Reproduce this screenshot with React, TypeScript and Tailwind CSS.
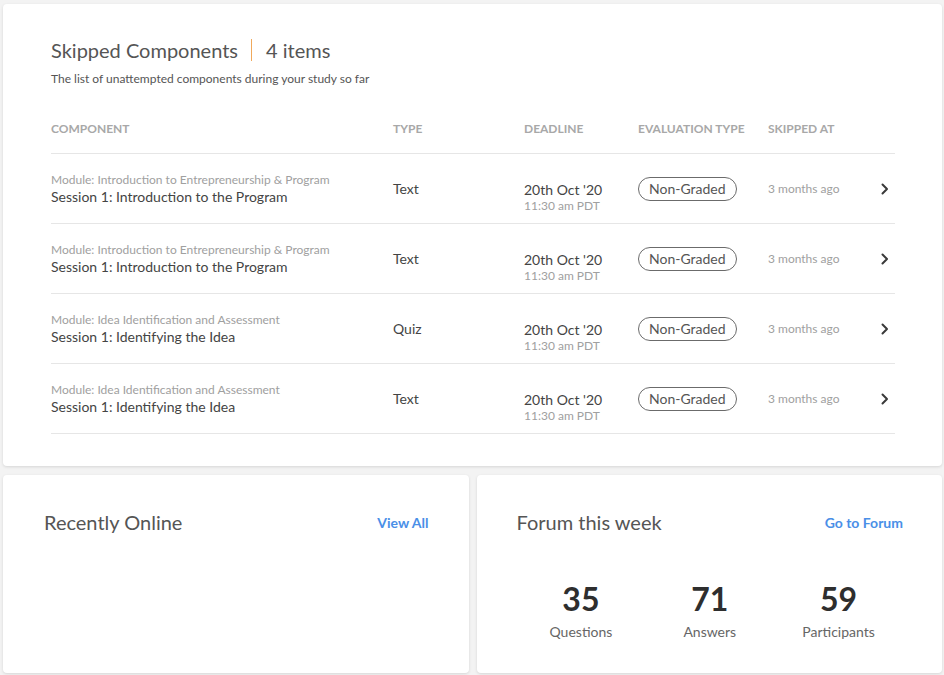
import React from "react";

const rows = [
    { module: "Module: Introduction to Entrepreneurship & Program", session: "Session 1: Introduction to the Program", type: "Text" },
    { module: "Module: Introduction to Entrepreneurship & Program", session: "Session 1: Introduction to the Program", type: "Text" },
    { module: "Module: Idea Identification and Assessment", session: "Session 1: Identifying the Idea", type: "Quiz" },
    { module: "Module: Idea Identification and Assessment", session: "Session 1: Identifying the Idea", type: "Text" },
];

const stats = [
    { value: "35", label: "Questions" },
    { value: "71", label: "Answers" },
    { value: "59", label: "Participants" },
];

const cols = "grid grid-cols-[342px_131px_114px_130px_1fr] items-center";

function Chevron() {
    return (
        <svg width="8" height="12" viewBox="0 0 8 12" fill="none">
            <path d="M1.5 1.5L6 6l-4.5 4.5" stroke="#3a3a3a" strokeWidth="2" strokeLinecap="round" strokeLinejoin="round"/>
        </svg>
    );
}

export default function App() {
    return (
        <div className="min-h-[675px] bg-[#f3f3f3] pl-[3px] pr-[2px] pt-[4px] pb-[2px] font-['Lato','Open_Sans',sans-serif] text-[#444]">
            {/* skipped components */}
            <section className="bg-white rounded-[4px] shadow-[0_1px_3px_rgba(0,0,0,0.12)] pl-[48px] pr-[47px] pt-[33px] pb-[32px]">
                <div className="flex items-center text-[20px] leading-[26px] text-[#555]">
                    <span>Skipped Components</span>
                    <span className="ml-[13px] mr-[14px] w-px h-[22px] bg-[#f0a95c]"></span>
                    <span>4 items</span>
                </div>
                <p className="mt-[8px] text-[12px] leading-[16px] text-[#555]">The list of unattempted components during your study so far</p>

                <div className={`${cols} mt-[26px] h-[41px] pb-[8px] border-b border-[#e6e6e6] text-[12px] font-bold text-[#a8a8a8]`}>
                    <span>COMPONENT</span>
                    <span>TYPE</span>
                    <span>DEADLINE</span>
                    <span>EVALUATION TYPE</span>
                    <span>SKIPPED AT</span>
                </div>

                {rows.map((r, i) => (
                    <div key={i} className={`${cols} h-[70px] border-b border-[#e6e6e6]`}>
                        <div className="flex flex-col">
                            <span className="text-[12px] leading-[15px] text-[#a0a0a0]">{r.module}</span>
                            <span className="text-[14px] leading-[19px] text-[#444]">{r.session}</span>
                        </div>
                        <span className="text-[14px] text-[#444]">{r.type}</span>
                        <div className="flex flex-col pt-[17px]">
                            <span className="text-[14px] leading-[17px] text-[#444]">20th Oct '20</span>
                            <span className="text-[12px] leading-[15px] text-[#a0a0a0]">11:30 am PDT</span>
                        </div>
                        <div>
                            <span className="inline-flex items-center h-[24px] px-[10px] rounded-full border border-[#6b6b6b] text-[14px] text-[#555]">Non-Graded</span>
                        </div>
                        <div className="flex items-center justify-between pr-[6px]">
                            <span className="text-[12px] text-[#a0a0a0]">3 months ago</span>
                            <Chevron />
                        </div>
                    </div>
                ))}
            </section>

            <div className="grid grid-cols-2 gap-[8px] mt-[9px]">
                <section className="bg-white rounded-[4px] shadow-[0_1px_3px_rgba(0,0,0,0.12)] h-[198px] pl-[41px] pr-[40px] pt-[34px]">
                    <div className="flex items-center justify-between">
                        <h2 className="text-[20px] leading-[26px] text-[#555]">Recently Online</h2>
                        <a className="text-[14px] font-bold text-[#4a8fe7]">View All</a>
                    </div>
                </section>

                <section className="bg-white rounded-[4px] shadow-[0_1px_3px_rgba(0,0,0,0.12)] h-[198px] pl-[40px] pr-[39px] pt-[34px]">
                    <div className="flex items-center justify-between">
                        <h2 className="text-[20px] leading-[26px] text-[#555]">Forum this week</h2>
                        <a className="text-[14px] font-bold text-[#4a8fe7]">Go to Forum</a>
                    </div>
                    <div className="grid grid-cols-3 mt-[45px]">
                        {stats.map((s) => (
                            <div key={s.label} className="flex flex-col items-center">
                                <span className="text-[32px] leading-[38px] font-bold text-[#2e2e2e]">{s.value}</span>
                                <span className="mt-[5px] text-[14px] leading-[18px] text-[#666]">{s.label}</span>
                            </div>
                        ))}
                    </div>
                </section>
            </div>
        </div>
    );
}
